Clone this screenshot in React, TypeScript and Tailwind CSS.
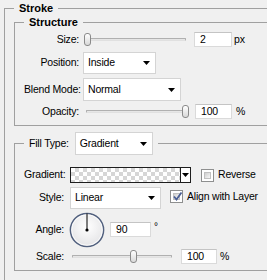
import { ReactNode } from "react";

type SliderProps = {
  className: string;
  trackClass: string;
  thumbClass: string;
};

function Slider({ className, trackClass, thumbClass }: SliderProps) {
  return (
    <div className={`relative h-[15px] shrink-0 ${className}`}>
      <div
        className={`absolute top-[6px] h-[3px] rounded-[1px] border border-[#b0b0b0] border-b-[#e0e0e0] bg-[#e6e6e6] ${trackClass}`}
      />
      <div
        className={`absolute top-[1px] h-[13px] w-[7px] rounded-[3px] border border-[#8a8a8a] bg-gradient-to-b from-[#ffffff] to-[#d8d8d8] ${thumbClass}`}
      />
    </div>
  );
}

function NumberBox({ value, className }: { value: string; className: string }) {
  return (
    <div
      className={`flex h-[15px] shrink-0 items-center border border-[#dadada] border-t-[#c4c4c4] bg-white pl-[5px] text-[10.5px] leading-none text-black ${className}`}
    >
      {value}
    </div>
  );
}

function Arrow() {
  return (
    <svg width="7" height="4" viewBox="0 0 7 4" className="shrink-0">
      <path d="M0 0H7L3.5 4Z" fill="#000" />
    </svg>
  );
}

function Dropdown({ value, className }: { value: string; className: string }) {
  return (
    <div
      className={`flex shrink-0 items-center justify-between border border-[#d4d4d4] bg-white pl-[4px] pr-[5px] text-[10.5px] text-black ${className}`}
    >
      <span>{value}</span>
      <Arrow />
    </div>
  );
}

function Checkbox({ checked }: { checked?: boolean }) {
  return (
    <div className="relative h-[13px] w-[13px] shrink-0 border border-[#8e8f8f] bg-white p-[2px]">
      <div className="h-full w-full border border-[#c0c0c0] bg-gradient-to-br from-[#cfcfcf] to-[#f7f7f7]" />
      {checked ? (
        <svg width="11" height="11" viewBox="0 0 11 11" className="absolute left-[1px] top-[0px]">
          <path d="M2 5.5L4.5 8.5L9.5 1.5" fill="none" stroke="#4a5f94" strokeWidth="1.8" />
        </svg>
      ) : null}
    </div>
  );
}

function Row({
  label,
  labelWidth,
  height,
  className,
  children,
}: {
  label: string;
  labelWidth: string;
  height: string;
  className?: string;
  children: ReactNode;
}) {
  return (
    <div className={`flex items-center whitespace-nowrap ${height} ${className ?? ""}`}>
      <div className={`shrink-0 text-right ${labelWidth}`}>{label}</div>
      {children}
    </div>
  );
}

function Dial() {
  return (
    <svg width="36" height="36" viewBox="0 0 36 36" className="ml-[-1px] shrink-0">
      <defs>
        <radialGradient id="dialFill" cx="50%" cy="40%" r="60%">
          <stop offset="0%" stopColor="#ffffff" />
          <stop offset="100%" stopColor="#e4e4e6" />
        </radialGradient>
      </defs>
      <circle cx="18" cy="18" r="16.6" fill="url(#dialFill)" stroke="#52617f" strokeWidth="1.5" />
      <circle cx="18" cy="18" r="15.3" fill="none" stroke="#ffffff" strokeWidth="0.8" />
      <line x1="18" y1="18" x2="18" y2="1.5" stroke="#000" strokeWidth="1" />
      <circle cx="18" cy="18" r="1.6" fill="#000" />
    </svg>
  );
}

export default function App() {
  return (
    <div className="h-[280px] w-[267px] overflow-hidden bg-[#f0f0f0] font-['Liberation_Sans',Arial,sans-serif] text-[10.5px] tracking-[-0.2px] text-black">
      <fieldset className="ml-[4px] mt-[2px] w-[300px] border border-[#a0a0a0] pb-[20px] pl-[9px] pr-[12px]">
        <legend className="h-[13px] px-[5px] text-[11px] font-bold leading-[13px] tracking-normal">Stroke</legend>

        <fieldset className="border border-[#a0a0a0] pb-[6px] pl-[9px] pt-[2px]">
          <legend className="h-[15px] px-[5px] text-[11px] font-bold leading-[15px] tracking-normal">
            Structure
          </legend>

          <Row label="Size:" labelWidth="w-[55px]" height="h-[15px]">
            <Slider
              className="ml-[4px] w-[108px]"
              trackClass="left-[3px] w-[100px]"
              thumbClass="left-[1px]"
            />
            <NumberBox value="2" className="ml-[3px] w-[38px]" />
            <span className="ml-[2px]">px</span>
          </Row>

          <Row label="Position:" labelWidth="w-[55px]" height="h-[22px]" className="mt-[5px]">
            <Dropdown value="Inside" className="ml-[4px] h-[22px] w-[73px]" />
          </Row>

          <Row label="Blend Mode:" labelWidth="w-[55px]" height="h-[23px]" className="mt-[4px]">
            <Dropdown value="Normal" className="ml-[4px] h-[23px] w-[98px]" />
          </Row>

          <Row label="Opacity:" labelWidth="w-[55px]" height="h-[15px]" className="mt-[3px]">
            <Slider
              className="ml-[4px] w-[108px]"
              trackClass="left-[3px] w-[100px]"
              thumbClass="left-[99px]"
            />
            <NumberBox value="100" className="ml-[4px] w-[37px]" />
            <span className="ml-[4px]">%</span>
          </Row>
        </fieldset>

        <fieldset className="mt-[6px] border border-[#a0a0a0] pb-[6px] pl-[9px] pt-[12px]">
          <legend className="flex h-[23px] items-center whitespace-nowrap px-[5px]">
            <span>Fill Type:</span>
            <Dropdown value="Gradient" className="ml-[6px] h-[23px] w-[78px]" />
          </legend>

          <Row label="Gradient:" labelWidth="w-[40px]" height="h-[16px]">
            <div className="ml-[6px] flex h-[16px] w-[121px] shrink-0 border border-[#1e1e1e]">
              <div className="h-full flex-1 bg-[conic-gradient(#d6d6d6_25%,#ffffff_0_50%,#d6d6d6_0_75%,#ffffff_0)] bg-[length:8px_8px]" />
              <div className="flex h-full w-[10px] items-center justify-center border-l border-[#1e1e1e] bg-white">
                <Arrow />
              </div>
            </div>
            <div className="ml-[10px]">
              <Checkbox />
            </div>
            <span className="ml-[4px]">Reverse</span>
          </Row>

          <Row label="Style:" labelWidth="w-[40px]" height="h-[22px]" className="mt-[4px]">
            <Dropdown value="Linear" className="ml-[6px] h-[22px] w-[91px]" />
            <div className="ml-[9px] mt-[3px] self-start">
              <Checkbox checked />
            </div>
            <span className="ml-[4px] mt-[2px] self-start">Align with Layer</span>
          </Row>

          <Row label="Angle:" labelWidth="w-[40px]" height="h-[35px]" className="mt-[3px]">
            <div className="ml-[6px] flex h-[35px] items-center">
              <Dial />
            </div>
            <NumberBox value="90" className="ml-[5px] w-[41px]" />
            <span className="ml-[3px] mt-[7px] self-start text-[10px]">°</span>
          </Row>

          <Row label="Scale:" labelWidth="w-[40px]" height="h-[15px]" className="mt-[2px]">
            <Slider
              className="ml-[6px] w-[108px]"
              trackClass="left-[2px] w-[100px]"
              thumbClass="left-[60px]"
            />
            <NumberBox value="100" className="ml-[3px] w-[36px]" />
            <span className="ml-[3px]">%</span>
          </Row>
        </fieldset>
      </fieldset>
    </div>
  );
}
